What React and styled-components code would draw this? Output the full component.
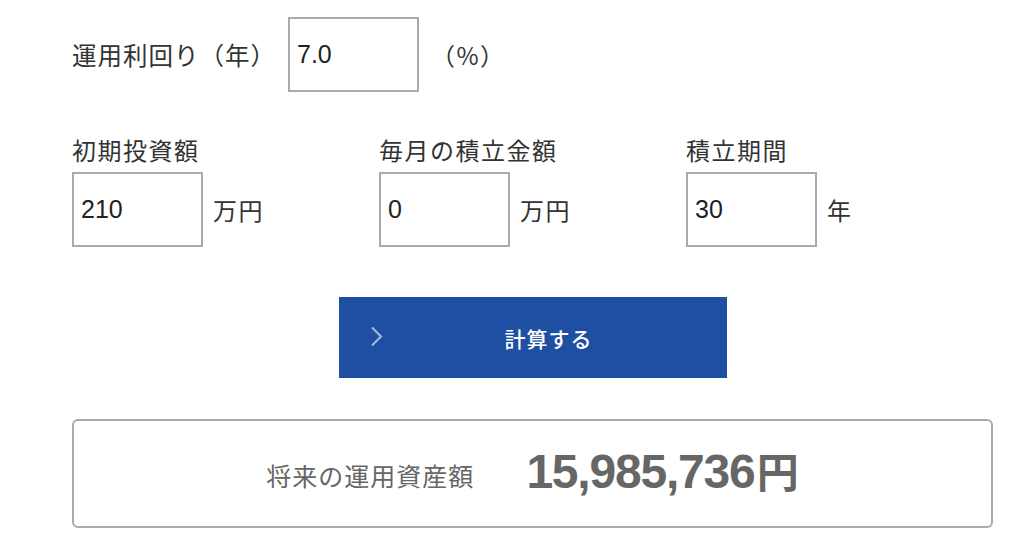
import React from "react";
import styled, { createGlobalStyle } from "styled-components";

const GlobalStyle = createGlobalStyle`
  body {
    margin: 0;
    background: #fff;
    font-family: "Noto Sans CJK JP", "Noto Sans", sans-serif;
    color: #333;
  }
`;

const Page = styled.div`
  width: 921px;
  padding: 17px 0 0 72px;
`;

const RateRow = styled.div`
  display: flex;
  align-items: center;
  height: 75px;
`;

const Label = styled.span`
  font-size: 24px;
  letter-spacing: 1.5px;
  line-height: 35px;
  color: #333;
`;

const RateLabel = styled(Label)`
  width: 216px;
  letter-spacing: 1px;
  font-size: 24.5px;
`;

const Unit = styled(Label)`
  margin-left: ${(p) => p.$gap || 10}px;
`;

const NumInput = styled.input`
  box-sizing: border-box;
  width: 131px;
  height: 75px;
  border: 2px solid #aaa;
  padding: 0 7px;
  font-family: "Liberation Sans", Arial, sans-serif;
  font-size: 25px;
  color: #222;
  outline: none;
`;

const Grid = styled.div`
  display: grid;
  grid-template-columns: repeat(3, 1fr);
  margin-top: 40px;
`;

const Field = styled.div`
  display: flex;
  flex-direction: column;
`;

const FieldRow = styled.div`
  display: flex;
  align-items: center;
  margin-top: 5px;
`;

const CalcButton = styled.button`
  position: relative;
  display: flex;
  align-items: center;
  justify-content: center;
  width: 388px;
  height: 81px;
  margin: 50px auto 0;
  padding: 0 0 0 32px;
  border: none;
  background: #1f4fa3;
  color: #fff;
  font-family: "Noto Sans CJK JP", sans-serif;
  font-size: 21px;
  font-weight: 500;
  letter-spacing: 1px;
  cursor: pointer;
`;

const Chevron = styled.svg`
  position: absolute;
  left: 31px;
  top: 29px;
`;

const Result = styled.div`
  box-sizing: border-box;
  display: flex;
  align-items: center;
  justify-content: center;
  gap: 52px;
  height: 109px;
  margin-top: 41px;
  border: 2px solid #aaa;
  border-radius: 6px;
  color: #666;
  line-height: 1;
`;

const ResultLabel = styled.span`
  font-size: 25px;
  letter-spacing: 1px;
  padding-top: 4px;
`;

const Amount = styled.span`
  font-family: "Liberation Sans", Arial, sans-serif;
  font-size: 48px;
  font-weight: 700;
  letter-spacing: -1.2px;
  padding-bottom: 4px;
`;

const Yen = styled.span`
  font-family: "Noto Sans CJK JP", sans-serif;
  font-size: 42px;
  font-weight: 700;
  letter-spacing: 0;
  margin-left: 2px;
`;

const fields = [
  { label: "初期投資額", value: "210", unit: "万円" },
  { label: "毎月の積立金額", value: "0", unit: "万円" },
  { label: "積立期間", value: "30", unit: "年" },
];

export default function App() {
  return (
    <>
      <GlobalStyle />
      <Page>
        <RateRow>
          <RateLabel>運用利回り（年）</RateLabel>
          <NumInput defaultValue="7.0" />
          <Unit $gap={12}>（%）</Unit>
        </RateRow>
        <Grid>
          {fields.map((f) => (
            <Field key={f.label}>
              <Label>{f.label}</Label>
              <FieldRow>
                <NumInput defaultValue={f.value} />
                <Unit>{f.unit}</Unit>
              </FieldRow>
            </Field>
          ))}
        </Grid>
        <CalcButton>
          <Chevron width="13" height="21" viewBox="0 0 13 21">
            <polyline
              points="2,1.5 11,10.5 2,19.5"
              fill="none"
              stroke="#a9bbdd"
              strokeWidth="2"
            />
          </Chevron>
          計算する
        </CalcButton>
        <Result>
          <ResultLabel>将来の運用資産額</ResultLabel>
          <Amount>
            15,985,736<Yen>円</Yen>
          </Amount>
        </Result>
      </Page>
    </>
  );
}
